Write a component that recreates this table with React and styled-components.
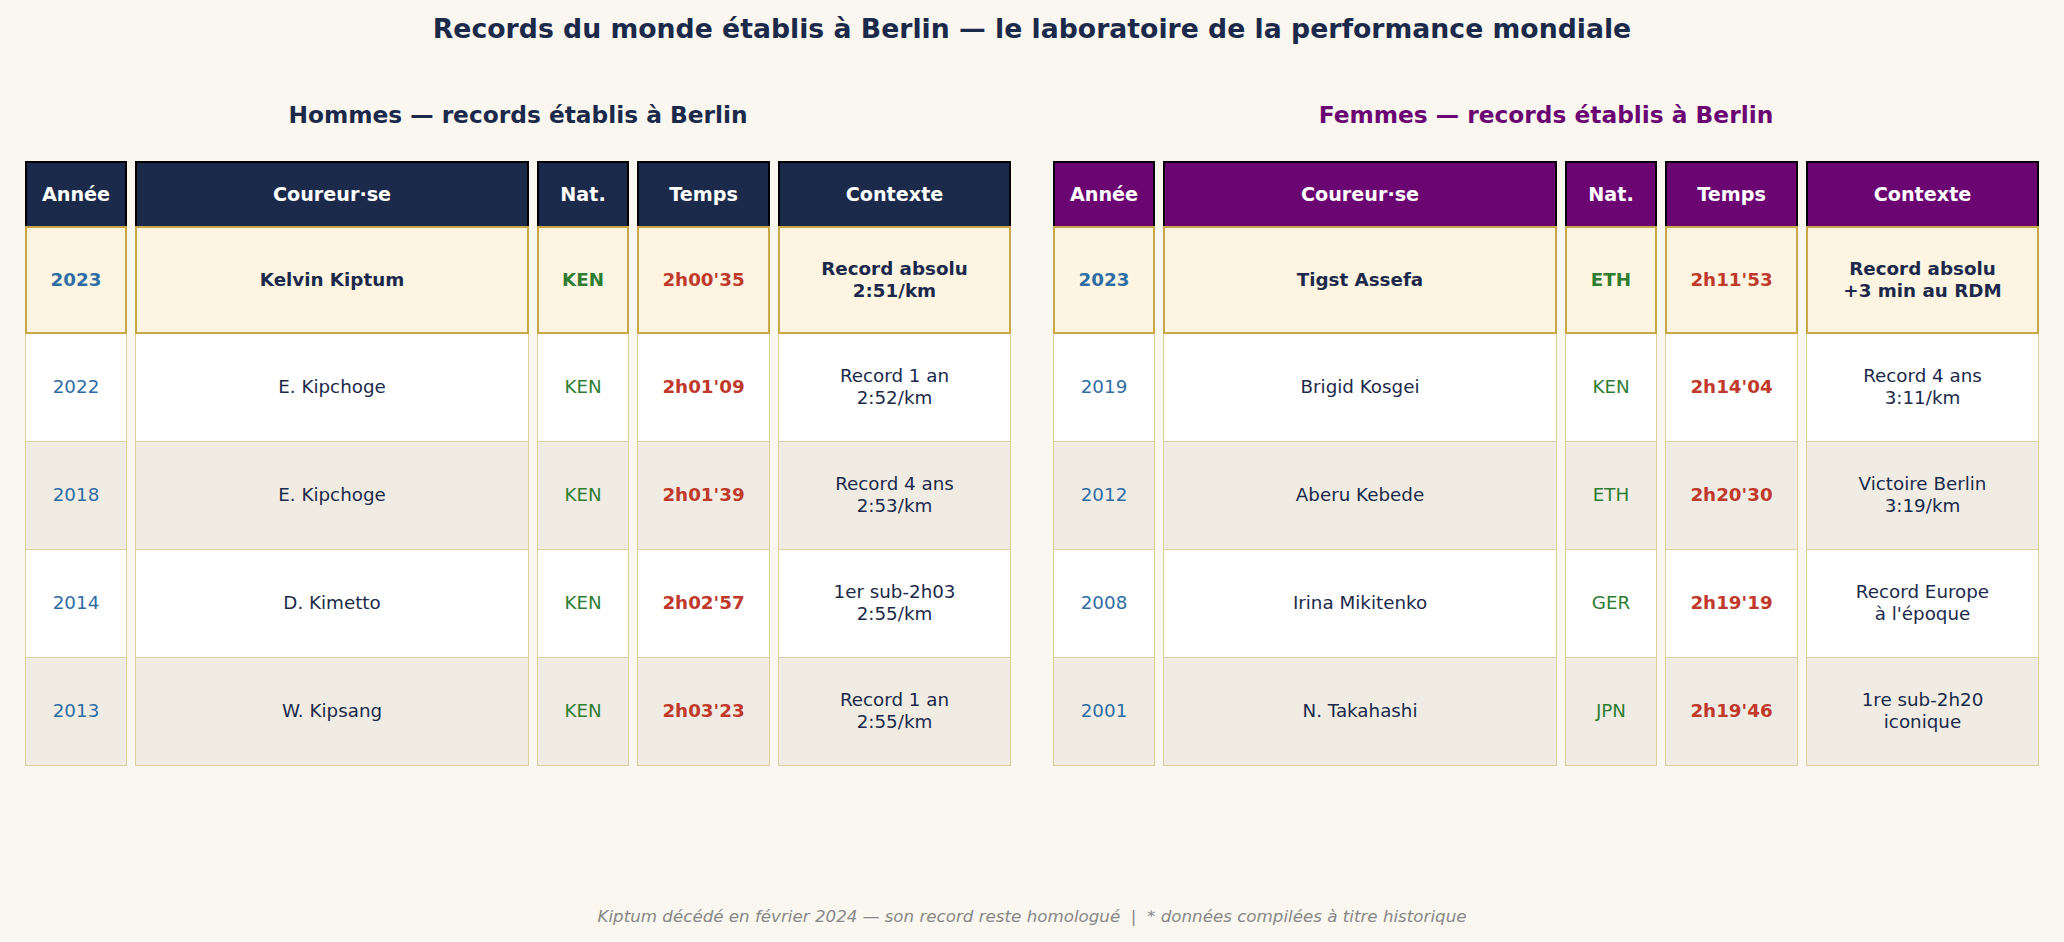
import React from "react";
import styled, { createGlobalStyle } from "styled-components";

const GlobalStyle = createGlobalStyle`
  html, body {
    margin: 0;
    padding: 0;
    background: #faf7f0;
  }
  body {
    font-family: "DejaVu Sans", "Liberation Sans", sans-serif;
  }
`;

const NAVY = "#1b2a4a";
const PURPLE = "#6a0572";

const Page = styled.div`
  width: 2064px;
  height: 942px;
  box-sizing: border-box;
  padding: 13px 25px 16px;
  display: flex;
  flex-direction: column;
  background: #faf7f0;
  color: ${NAVY};
`;

const Title = styled.h1`
  margin: 0;
  font-size: 26.7px;
  line-height: 32px;
  font-weight: bold;
  text-align: center;
  color: ${NAVY};
`;

const Panels = styled.div`
  display: flex;
  gap: 42px;
  margin-top: 55.5px;
`;

const Panel = styled.section`
  width: 986px;
  display: flex;
  flex-direction: column;
`;

const Subtitle = styled.h2`
  margin: 0 0 32px;
  font-size: 23.3px;
  line-height: 28px;
  font-weight: bold;
  text-align: center;
  color: ${(p) => p.$color};
`;

const Grid = styled.div`
  display: grid;
  grid-template-columns: 102px 394px 92px 133px 233px;
  grid-template-rows: 65px repeat(5, 108px);
  column-gap: 8px;
`;

const HeadCell = styled.div`
  box-sizing: border-box;
  display: flex;
  align-items: center;
  justify-content: center;
  background: ${(p) => p.$bg};
  border: 2px solid #000;
  border-bottom: none;
  color: #fff;
  font-size: 19.2px;
  font-weight: bold;
`;

const rowBg = { gold: "#fdf5e2", white: "#ffffff", alt: "#f0ece4" };

const Cell = styled.div`
  box-sizing: border-box;
  display: flex;
  align-items: center;
  justify-content: center;
  text-align: center;
  white-space: pre-line;
  line-height: 22px;
  font-size: 18.3px;
  background: ${(p) => rowBg[p.$row]};
  border: ${(p) => (p.$row === "gold" ? "2px solid #c9a84c" : "1px solid #ddd0a0")};
  border-top: ${(p) => (p.$row === "gold" ? "2px solid #c9a84c" : "none")};
  font-weight: ${(p) => (p.$row === "gold" || p.$bold ? "bold" : "normal")};
  color: ${(p) => p.$tone || NAVY};
`;

const Footer = styled.p`
  margin: auto 0 0;
  font-size: 16.7px;
  line-height: 20px;
  font-style: italic;
  text-align: center;
  color: #888888;
`;

const heads = ["Année", "Coureur·se", "Nat.", "Temps", "Contexte"];

const men = [
  ["2023", "Kelvin Kiptum", "KEN", "2h00'35", "Record absolu\n2:51/km"],
  ["2022", "E. Kipchoge", "KEN", "2h01'09", "Record 1 an\n2:52/km"],
  ["2018", "E. Kipchoge", "KEN", "2h01'39", "Record 4 ans\n2:53/km"],
  ["2014", "D. Kimetto", "KEN", "2h02'57", "1er sub-2h03\n2:55/km"],
  ["2013", "W. Kipsang", "KEN", "2h03'23", "Record 1 an\n2:55/km"],
];

const women = [
  ["2023", "Tigst Assefa", "ETH", "2h11'53", "Record absolu\n+3 min au RDM"],
  ["2019", "Brigid Kosgei", "KEN", "2h14'04", "Record 4 ans\n3:11/km"],
  ["2012", "Aberu Kebede", "ETH", "2h20'30", "Victoire Berlin\n3:19/km"],
  ["2008", "Irina Mikitenko", "GER", "2h19'19", "Record Europe\nà l'époque"],
  ["2001", "N. Takahashi", "JPN", "2h19'46", "1re sub-2h20\niconique"],
];

const tones = ["#2e6da4", NAVY, "#2e7d32", "#c0392b", NAVY];

function RecordTable({ rows, color, title }) {
  return (
    <Panel>
      <Subtitle $color={color}>{title}</Subtitle>
      <Grid>
        {heads.map((h) => (
          <HeadCell key={h} $bg={color}>
            {h}
          </HeadCell>
        ))}
        {rows.map((r, i) => {
          const kind = i === 0 ? "gold" : i % 2 === 1 ? "white" : "alt";
          return r.map((v, j) => (
            <Cell key={i + "-" + j} $row={kind} $tone={tones[j]} $bold={j === 3}>
              {v}
            </Cell>
          ));
        })}
      </Grid>
    </Panel>
  );
}

export default function App() {
  return (
    <>
      <GlobalStyle />
      <Page>
        <Title>Records du monde établis à Berlin — le laboratoire de la performance mondiale</Title>
        <Panels>
          <RecordTable rows={men} color={NAVY} title="Hommes — records établis à Berlin" />
          <RecordTable rows={women} color={PURPLE} title="Femmes — records établis à Berlin" />
        </Panels>
        <Footer>
          Kiptum décédé en février 2024 — son record reste homologué&nbsp; |&nbsp; * données compilées à titre historique
        </Footer>
      </Page>
    </>
  );
}
